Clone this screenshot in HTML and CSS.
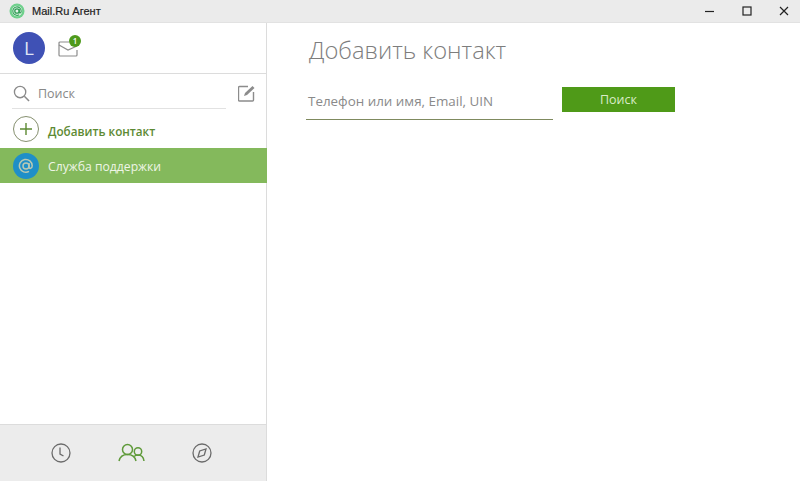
FILE: index.html
```html
<!DOCTYPE html>
<html lang="ru">
<head>
<meta charset="utf-8">
<title>Mail.Ru Агент</title>
<link rel="stylesheet" href="styles.css">
</head>
<body>
<div class="window">
  <header class="titlebar">
    <div class="app">
      <svg class="app-logo" width="16" height="16" viewBox="0 0 16 16"><circle cx="8" cy="8" r="7.5" fill="#6fd08c"/><circle cx="8" cy="8" r="5.2" fill="#e6f5ea"/><circle cx="8" cy="8" r="2.2" fill="none" stroke="#2f9d55" stroke-width="1.3"/><path d="M10.2 6v3c0 1.4 2 1.2 2-.8a4.2 4.2 0 1 0-2 3.5" fill="none" stroke="#2f9d55" stroke-width="1.1"/></svg>
      <span class="app-name">Mail.Ru Агент</span>
    </div>
    <div class="controls">
      <svg width="10" height="10" viewBox="0 0 10 10"><path d="M0 5.5h9" stroke="#222" stroke-width="1.2"/></svg>
      <svg width="10" height="10" viewBox="0 0 10 10"><rect x="1" y="1" width="8" height="8" fill="none" stroke="#222" stroke-width="1.2"/></svg>
      <svg width="10" height="10" viewBox="0 0 10 10"><path d="M1 1l8 8M9 1l-8 8" stroke="#222" stroke-width="1.2"/></svg>
    </div>
  </header>
  <div class="body">
    <aside class="sidebar">
      <div class="profile">
        <div class="avatar">L</div>
        <div class="mail">
          <svg width="20" height="16" viewBox="0 0 20 16"><path d="M11 1H2a1 1 0 0 0-1 1v12a1 1 0 0 0 1 1h16a1 1 0 0 0 1-1V9" fill="none" stroke="#8c8c8c" stroke-width="1.2"/><path d="M1 4l9 5 9-4" fill="none" stroke="#8c8c8c" stroke-width="1.2"/></svg>
          <span class="badge">1</span>
        </div>
      </div>
      <div class="search-row">
        <div class="search">
          <svg width="17" height="17" viewBox="0 0 18 18"><circle cx="7.5" cy="7.5" r="6" fill="none" stroke="#8a8a8a" stroke-width="1.4"/><path d="M12 12l5 5" stroke="#8a8a8a" stroke-width="1.6"/></svg>
          <span class="search-text">Поиск</span>
        </div>
        <svg class="compose" width="17" height="17" viewBox="0 0 17 17"><path d="M10 1.500H1.500a1 1 0 0 0-1 1v12.500a1 1 0 0 0 1 1h13a1 1 0 0 0 1-1V7" fill="none" stroke="#8c8c8c" stroke-width="1.4"/><path d="M6 11l1-3 7.500-7 2 2-7.500 7z" fill="#8c8c8c"/></svg>
      </div>
      <div class="add-row">
        <span class="add-icon">
          <svg width="12" height="12" viewBox="0 0 12 12"><path d="M6 0v12M0 6h12" stroke="#5d8a33" stroke-width="1.4"/></svg>
        </span>
        <span class="add-text">Добавить контакт</span>
      </div>
      <div class="contact">
        <span class="contact-icon">
          <svg width="16" height="16" viewBox="0 0 16 16"><circle cx="8" cy="8" r="3" fill="none" stroke="#b9c9b4" stroke-width="1.5"/><path d="M11 5v4c0 2 3.200 2 3.200-1.200A6.400 6.400 0 1 0 11 13.400" fill="none" stroke="#b9c9b4" stroke-width="1.5"/></svg>
        </span>
        <span class="contact-name">Служба поддержки</span>
      </div>
      <div class="spacer"></div>
      <nav class="tabs">
        <svg width="20" height="20" viewBox="0 0 20 20"><circle cx="10" cy="10" r="9" fill="none" stroke="#6b6b6b" stroke-width="1.300"/><path d="M9 4.500V11l3.500 2" fill="none" stroke="#6b6b6b" stroke-width="1.300"/></svg>
        <svg width="27" height="20" viewBox="0 0 27 20"><circle cx="9.500" cy="6.500" r="5" fill="none" stroke="#5f9a3a" stroke-width="1.500"/><path d="M1 18c1-4.500 4-6.500 8.500-6.500S17 13.500 18 18" fill="none" stroke="#5f9a3a" stroke-width="1.500"/><circle cx="20" cy="8.500" r="3.700" fill="none" stroke="#5f9a3a" stroke-width="1.500"/><path d="M16 13.500c1.200-1 2.500-1.500 4-1.500 3.500 0 5.500 2 6 6" fill="none" stroke="#5f9a3a" stroke-width="1.500"/></svg>
        <svg width="20" height="20" viewBox="0 0 20 20"><circle cx="10" cy="10" r="9" fill="none" stroke="#6b6b6b" stroke-width="1.300"/><path d="M6 14l1.700-6L14 6l-1.700 6z" fill="none" stroke="#6b6b6b" stroke-width="1.300"/></svg>
      </nav>
    </aside>
    <main class="main">
      <h1 class="title">Добавить контакт</h1>
      <div class="form">
        <div class="field">Телефон или имя, Email, UIN</div>
        <button class="search-btn" type="button">Поиск</button>
      </div>
    </main>
  </div>
</div>
</body>
</html>
```
FILE: styles.css
```css
* { box-sizing: border-box; }
html, body { margin: 0; height: 100%; }
body { background: #fff; font-family: "Open Sans", "Noto Sans", sans-serif; overflow: hidden; }
.window { width: 800px; height: 481px; display: flex; flex-direction: column; }
.titlebar { height: 23px; background: #ebebeb; border-bottom: 1px solid #e2e2e2; display: flex; justify-content: space-between; align-items: center; flex: none; }
.app { display: flex; align-items: center; padding-left: 9px; gap: 7px; }
.app-logo { display: block; }
.app-name { font-family: "Liberation Sans", sans-serif; font-size: 11px; font-weight: 400; color: #222; -webkit-text-stroke: 0.2px #222; }
.controls { display: flex; align-items: center; gap: 27px; padding-right: 11px; }
.controls svg { display: block; }
.body { flex: 1; display: flex; min-height: 0; }
.sidebar { width: 267px; flex: none; border-right: 1px solid #dcdcdc; display: flex; flex-direction: column; }
.profile { height: 51px; border-bottom: 1px solid #dcdcdc; display: flex; align-items: center; padding-left: 13px; gap: 13px; flex: none; }
.avatar { width: 32px; height: 32px; border-radius: 50%; background: #3f51b5; color: #dfe3f5; font-size: 19px; display: flex; align-items: center; justify-content: center; }
.mail { position: relative; width: 20px; height: 16px; margin-top: 1px; }
.mail svg { display: block; }
.badge { position: absolute; top: -6px; right: -3px; width: 12px; height: 12px; border-radius: 50%; background: #4e9a1c; color: #fff; font-size: 8px; line-height: 12px; text-align: center; font-weight: 600; }
.search-row { height: 36px; display: flex; align-items: flex-start; position: relative; flex: none; }
.search { width: 214px; height: 35px; margin-left: 12px; padding: 4px 0 0 1px; border-bottom: 1px solid #e2e2e2; display: flex; align-items: center; gap: 8px; }
.search svg { display: block; }
.search-text { font-size: 12.500px; color: #888; }
.compose { margin: 11px 0 0 12px; display: block; }
.add-row { height: 38px; padding: 0 0 0 13px; display: flex; align-items: center; gap: 9px; flex: none; }
.add-icon { width: 26px; height: 26px; border: 1px solid #86906f; border-radius: 50%; display: flex; align-items: center; justify-content: center; }
.add-icon svg { display: block; }
.add-text { font-size: 11.700px; font-weight: 600; color: #5d8a33; padding-top: 4px; }
.contact { height: 35px; margin-right: -1px; background: #84b95c; display: flex; align-items: center; padding-left: 13px; gap: 9px; flex: none; }
.contact-icon { width: 26px; height: 26px; border-radius: 50%; background: #1f8fc8; display: flex; align-items: center; justify-content: center; }
.contact-icon svg { display: block; }
.contact-name { font-size: 12.200px; line-height: 19px; padding-top: 1px; color: #eef5e6; }
.spacer { flex: 1; }
.tabs { height: 57px; background: #ececec; border-top: 1px solid #dcdcdc; display: flex; align-items: center; padding-left: 51px; gap: 47px; flex: none; }
.tabs svg { display: block; }
.main { flex: 1; padding: 10px 0 0 39px; }
.title { margin: 0 0 0 3px; font-size: 23.700px; font-weight: 300; color: #7d7d7d; line-height: 34px; }
.form { display: flex; align-items: flex-start; margin-top: 20px; gap: 9px; }
.field { width: 247px; height: 33px; padding: 4px 0 0 2px; border-bottom: 1px solid #7f8a5e; font-size: 13.400px; line-height: 20px; color: #8a8a8a; }
.search-btn { width: 113px; height: 25px; border: 0; padding: 0; background: #4f9a18; color: #d9ecc8; font-family: inherit; font-size: 12.500px; }
```
